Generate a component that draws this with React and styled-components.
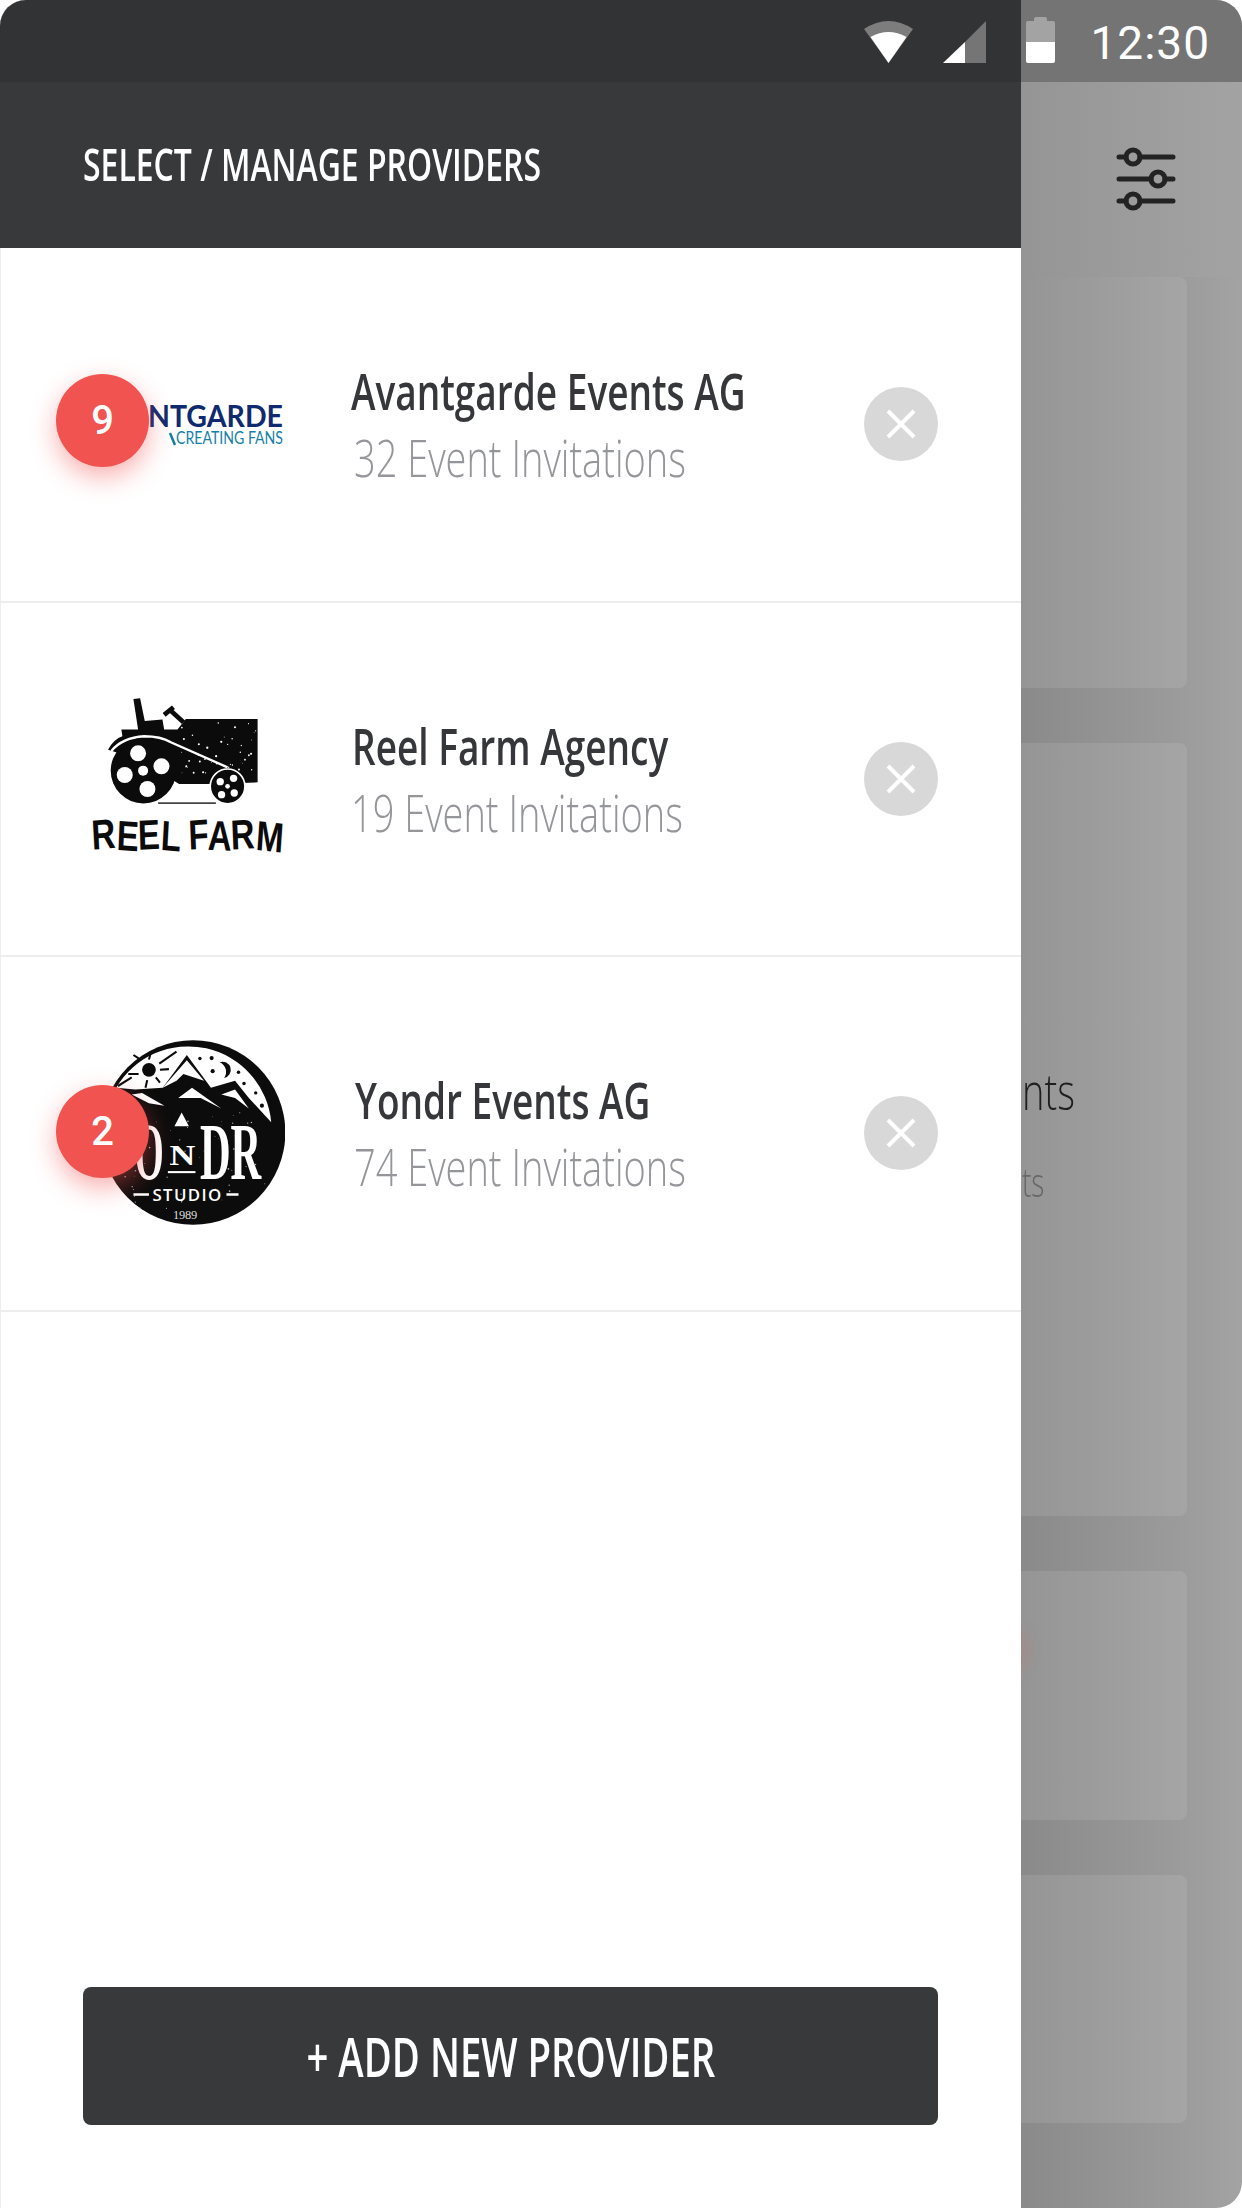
import React from "react";
import styled, { createGlobalStyle } from "styled-components";

const GlobalStyle = createGlobalStyle`
  html, body {
    margin: 0;
    padding: 0;
    background: #ffffff;
  }
`;

const Screen = styled.div`
  position: relative;
  width: 1242px;
  height: 2208px;
  overflow: hidden;
  background: #ffffff;
  font-family: "Open Sans", "Liberation Sans", sans-serif;
`;

const Backdrop = styled.div`
  position: absolute;
  inset: 0;
  border-radius: 26px;
  overflow: hidden;
  background: linear-gradient(90deg, #8a8a8a 1021px, #9c9c9c 1186px, #a3a3a3 1242px);
  display: flex;
  flex-direction: column;
  align-items: flex-end;
`;

const BackdropStatus = styled.div`
  align-self: stretch;
  height: 82px;
  background: #747474;
  flex-shrink: 0;
`;

const BackdropToolbar = styled.div`
  align-self: stretch;
  height: 195px;
  flex-shrink: 0;
  display: flex;
  justify-content: flex-end;
  padding: 64px 66px 0 0;
  box-sizing: border-box;
  background: linear-gradient(90deg, #959595 1021px, #a3a3a3 1242px);
`;

const BackdropCards = styled.div`
  display: flex;
  flex-direction: column;
  gap: 55px;
  padding-right: 55px;
`;

const BackdropCard = styled.div`
  position: relative;
  width: 250px;
  height: ${(p) => p.$h}px;
  border-radius: 0 8px 8px 0;
  background: linear-gradient(90deg, #959595 34%, #a5a5a5);
  box-sizing: border-box;
  padding-top: ${(p) => p.$pad || 0}px;
  overflow: hidden;
`;

const BackdropTitle = styled.div`
  font-weight: 300;
  font-size: 50px;
  line-height: 60px;
  color: #1e1e1e;
  transform: scaleX(0.76);
  transform-origin: left;
  white-space: nowrap;
  margin-left: 85px;
`;

const BackdropSub = styled(BackdropTitle)`
  font-size: 40px;
  line-height: 50px;
  color: #666;
  margin-top: 36px;
  transform: scaleX(0.7);
`;

const BadgeGlow = styled.div`
  position: absolute;
  left: 34px;
  top: 49px;
  width: 60px;
  height: 60px;
  border-radius: 50%;
  background: rgba(242, 83, 80, 0.1);
  filter: blur(6px);
`;

const Drawer = styled.div`
  position: absolute;
  top: 0;
  left: 0;
  bottom: 0;
  width: 1021px;
  background: #ffffff;
  border-radius: 26px 0 0 0;
  overflow: hidden;
  display: flex;
  flex-direction: column;
  box-shadow: inset 1px 0 0 #eeeeee;
`;

const DrawerStatus = styled.div`
  height: 82px;
  background: #323335;
  flex-shrink: 0;
`;

const DrawerHeader = styled.div`
  height: 166px;
  background: #38393b;
  flex-shrink: 0;
  display: flex;
  align-items: center;
  padding-left: 83px;
  box-sizing: border-box;
`;

const CondensedText = styled.span`
  display: inline-block;
  white-space: nowrap;
  transform-origin: left center;
  transform: scaleX(${(p) => p.$sx || 0.8});
`;

const HeaderTitle = styled(CondensedText)`
  font-weight: 600;
  font-size: 45px;
  line-height: 54px;
  color: #ffffff;
  margin-top: -2px;
`;

const ProviderList = styled.div`
  display: flex;
  flex-direction: column;
`;

const ProviderRow = styled.div`
  height: 354.5px;
  flex-shrink: 0;
  box-sizing: border-box;
  border-bottom: 2px solid #eceded;
  display: flex;
  align-items: center;
  padding-left: 80px;
  padding-right: 83px;
`;

const LogoSlot = styled.div`
  position: relative;
  width: 214px;
  height: 200px;
  flex-shrink: 0;
  display: flex;
  align-items: center;
  justify-content: center;
`;

const LogoArt = styled.div`
  flex-shrink: 0;
  transform: translate(${(p) => p.$dx || 0}px, ${(p) => p.$dy || 0}px);
`;

const UnreadBadge = styled.div`
  position: absolute;
  left: -24px;
  top: ${(p) => p.$top}px;
  width: 93px;
  height: 93px;
  border-radius: 50%;
  background: #f15350;
  color: #ffffff;
  font-size: 40px;
  font-weight: 500;
  font-family: Roboto, sans-serif;
  display: flex;
  align-items: center;
  justify-content: center;
  box-shadow: 0 10px 26px rgba(242, 83, 80, 0.45);
`;

const ProviderInfo = styled.div`
  flex: 1;
  min-width: 0;
  margin-left: ${(p) => p.$ml}px;
  display: flex;
  flex-direction: column;
  align-items: flex-start;
  gap: 8px;
`;

const ProviderName = styled(CondensedText)`
  font-weight: 600;
  font-size: 50px;
  line-height: 58px;
  color: #36373a;
`;

const ProviderCount = styled(CondensedText)`
  font-weight: 300;
  font-size: 52px;
  line-height: 58px;
  color: #95969a;
  margin-left: ${(p) => p.$offset || 0}px;
`;

const RemoveButton = styled.button`
  width: 74px;
  height: 74px;
  border: none;
  padding: 0;
  border-radius: 50%;
  background: #d8d8d8;
  flex-shrink: 0;
  display: flex;
  align-items: center;
  justify-content: center;
`;

const Footer = styled.div`
  margin-top: auto;
  padding: 0 83px 83px;
`;

const AddButton = styled.button`
  width: 100%;
  height: 138px;
  border: none;
  border-radius: 8px;
  background: #38393b;
  color: #ffffff;
  display: flex;
  align-items: center;
  justify-content: center;
  font-family: inherit;
`;

const AddLabel = styled(CondensedText)`
  font-weight: 600;
  font-size: 54px;
  line-height: 64px;
  transform-origin: center;
`;

const StatusIcons = styled.div`
  position: absolute;
  top: 0;
  right: 0;
  height: 63px;
  display: flex;
  align-items: flex-end;
`;

const StatusGap = styled.span`
  width: ${(p) => p.$w}px;
`;

const Clock = styled.div`
  font-family: Roboto, sans-serif;
  font-size: 46px;
  font-weight: 400;
  letter-spacing: 1px;
  color: #ffffff;
  margin: 0 32px 0 35px;
  line-height: 48px;
  height: 48px;
  position: relative;
  top: 4px;
`;

const CloseIcon = () => (
  <svg width="32" height="32" viewBox="0 0 32 32">
    <path d="M3 3 L29 29 M29 3 L3 29" stroke="#fff" strokeWidth="4" fill="none" />
  </svg>
);

const WifiIcon = () => (
  <svg width="49" height="42" viewBox="0 0 49 42" style={{ display: "block" }}>
    <path d="M0 8 Q24.5 -8 49 8 L24.5 42 Z" fill="#7d7d7e" />
    <path d="M6.5 16 Q24.5 6 42.5 16 L24.5 42 Z" fill="#fff" />
  </svg>
);

const SignalIcon = () => (
  <svg width="43" height="42" viewBox="0 0 43 42" style={{ display: "block" }}>
    <path d="M43 0 V42 H22 V21 Z" fill="#757576" />
    <path d="M22 21 V42 H0 Z" fill="#fff" />
  </svg>
);

const BatteryIcon = () => (
  <svg width="29" height="46" viewBox="0 0 29 46" style={{ display: "block" }}>
    <path d="M8 2 Q8 0 10 0 H19 Q21 0 21 2 V4 H27 Q29 4 29 6 V25 H0 V6 Q0 4 2 4 H8 Z" fill="#a3a3a3" />
    <path d="M0 25 H29 V44 Q29 46 27 46 H2 Q0 46 0 44 Z" fill="#fff" />
  </svg>
);

const SlidersIcon = () => (
  <svg width="60" height="66" viewBox="0 0 60 66" style={{ display: "block" }}>
    <g stroke="#232323" strokeWidth="5" fill="none" strokeLinecap="round">
      <path d="M3 11 H10 M24 11 H57 M3 33 H35 M49 33 H57 M3 55 H10 M24 55 H57" />
      <circle cx="17" cy="11" r="7" />
      <circle cx="42" cy="33" r="7" />
      <circle cx="17" cy="55" r="7" />
    </g>
  </svg>
);

// white flecks on the printed logos
const speckles = (count, seed, x, y, w, h, fill, maxR = 3) => {
  let s = seed;
  const next = () => {
    s = (s * 16807) % 2147483647;
    return (s % 1000) / 1000;
  };
  return Array.from({ length: count }, (_, i) => (
    <circle key={i} cx={x + next() * w} cy={y + next() * h} r={1 + next() * maxR} fill={fill} />
  ));
};

const AvantgardeLogo = () => (
  <svg width="210" height="70" viewBox="0 0 210 70" style={{ display: "block" }}>
    <text x="201" y="38" textAnchor="end" fontFamily="Lato, sans-serif" fontWeight="700" fontSize="31" fill="#0f2a6e" textLength="135" lengthAdjust="spacingAndGlyphs">
      NTGARDE
    </text>
    <text x="201" y="55" textAnchor="end" fontFamily="Lato, sans-serif" fontSize="17" fill="#1380a8" textLength="107" lengthAdjust="spacingAndGlyphs">
      CREATING FANS
    </text>
    <path d="M88 44 L93 56" stroke="#1380a8" strokeWidth="2.5" />
  </svg>
);

const ReelFarmLogo = () => (
  <svg width="207" height="164" viewBox="100 100 620 490" style={{ display: "block" }}>
    <path
      d="M172 272 Q190 240 215 232 L212 212 L262 212 L248 120 L268 118 L282 186 L335 182 L340 212 L380 212 L405 180 L620 180 L620 370 L480 375 L385 375 L260 300 Z"
      fill="#0b0b0b"
    />
    <path d="M398 190 L356 152 M340 168 L368 145" stroke="#0b0b0b" strokeWidth="14" fill="none" />
    {speckles(46, 71, 390, 190, 225, 175, "#fff", 2.5)}
    <path d="M182 276 Q215 236 280 232 Q330 232 360 250 L530 325" stroke="#fff" strokeWidth="7" fill="none" />
    <circle cx="278" cy="335" r="98" fill="#0b0b0b" />
    <circle cx="530" cy="382" r="52" fill="#0b0b0b" stroke="#fff" strokeWidth="5" />
    <g fill="#fff">
      <circle cx="262" cy="283" r="24" />
      <circle cx="332" cy="322" r="24" />
      <circle cx="222" cy="348" r="24" />
      <circle cx="290" cy="390" r="24" />
      <circle cx="277" cy="335" r="15" />
      <circle cx="508" cy="368" r="11" />
      <circle cx="548" cy="358" r="11" />
      <circle cx="550" cy="402" r="11" />
      <circle cx="512" cy="407" r="11" />
      <circle cx="530" cy="382" r="7" />
    </g>
    <path d="M322 432 H495" stroke="#444" strokeWidth="5" />
    <text x="125" y="572" rotate="-4 3 -2 4 0 -3 2 -3 5" fontFamily="'Liberation Sans', sans-serif" fontWeight="700" fontSize="126" fill="#0b0b0b" textLength="570" lengthAdjust="spacingAndGlyphs">
      REEL FARM
    </text>
  </svg>
);

const YondrLogo = () => (
  <svg width="186" height="193" viewBox="195 60 540 560" style={{ display: "block" }}>
    <circle cx="468" cy="340" r="268" fill="#0c0c0c" />
    <path d="M245 210 A242 242 0 0 1 695 310 L630 240 L590 190 L520 210 L450 115 L380 210 L300 215 Z" fill="#fff" />
    <path d="M380 210 L450 130 L500 190 L440 170 L420 190 Z" fill="#fff" />
    <path d="M425 240 L465 210 L550 270 L490 240 Z" fill="#fff" />
    <path d="M550 230 L590 215 L630 270 L590 240 Z" fill="#fff" />
    <path d="M290 230 L320 225 L385 262 L340 255 Z" fill="#fff" />
    <circle cx="340" cy="158" r="20" fill="#0c0c0c" />
    <path d="M290 180 L250 205 M310 125 L295 115 M340 128 L345 110 M370 140 L420 105 M372 158 L398 156 M360 180 L372 195 M335 188 L330 210 M310 170 L280 170" stroke="#0c0c0c" strokeWidth="6" />
    <path d="M545 136 A24 24 0 1 1 558 182 A30 30 0 0 0 545 136 Z" fill="#0c0c0c" />
    <circle cx="488" cy="125" r="5" fill="#0c0c0c" />
    <circle cx="522" cy="124" r="6" fill="#0c0c0c" />
    <circle cx="525" cy="162" r="6" fill="#0c0c0c" />
    <circle cx="600" cy="165" r="5" fill="#0c0c0c" />
    <circle cx="616" cy="198" r="5" fill="#0c0c0c" />
    <circle cx="650" cy="225" r="5" fill="#0c0c0c" />
    <circle cx="668" cy="262" r="6" fill="#0c0c0c" />
    {speckles(70, 29, 260, 280, 420, 290, "#b5b5b5", 1.5)}
    <path d="M435 282 L456 322 L414 322 Z" fill="#fff" />
    <text x="298" y="475" fontFamily="'Liberation Serif', serif" fontWeight="700" fontSize="235" fill="#fff" textLength="85" lengthAdjust="spacingAndGlyphs">
      O
    </text>
    <text x="400" y="435" fontFamily="'Liberation Serif', serif" fontWeight="700" fontSize="88" fill="#fff" textLength="75" lengthAdjust="spacingAndGlyphs">
      N
    </text>
    <path d="M395 455 H475" stroke="#fff" strokeWidth="6" />
    <text x="488" y="475" fontFamily="'Liberation Serif', serif" fontWeight="700" fontSize="235" fill="#fff" textLength="178" lengthAdjust="spacingAndGlyphs">
      DR
    </text>
    <text x="350" y="540" fontFamily="'Open Sans', sans-serif" fontWeight="600" fontSize="49" fill="#fff" textLength="200" lengthAdjust="spacing">
      STUDIO
    </text>
    <path d="M295 520 H340 M565 520 H600" stroke="#fff" strokeWidth="7" />
    <text x="410" y="590" fontFamily="'Liberation Serif', serif" fontSize="36" fill="#ddd" textLength="70">
      1989
    </text>
  </svg>
);

const providers = [
  { name: "Avantgarde Events AG", count: "32 Event Invitations", logo: <AvantgardeLogo />, badge: "9", badgeTop: 50, ml: 57, offset: 3 },
  { name: "Reel Farm Agency", count: "19 Event Invitations", logo: <ReelFarmLogo />, dy: -5, ml: 58, offset: -1 },
  { name: "Yondr Events AG", count: "74 Event Invitations", logo: <YondrLogo />, badge: "2", badgeTop: 52, dx: 5, dy: -1, ml: 61, offset: -1 },
];

const App = () => {
  return (
    <Screen>
      <GlobalStyle />
      <Backdrop>
        <BackdropStatus />
        <BackdropToolbar>
          <SlidersIcon />
        </BackdropToolbar>
        <BackdropCards>
          <BackdropCard $h={411} />
          <BackdropCard $h={773} $pad={318}>
            <BackdropTitle>nts</BackdropTitle>
            <BackdropSub>ts</BackdropSub>
          </BackdropCard>
          <BackdropCard $h={249}>
            <BadgeGlow />
          </BackdropCard>
          <BackdropCard $h={248} />
        </BackdropCards>
      </Backdrop>
      <Drawer>
        <DrawerStatus />
        <DrawerHeader>
          <HeaderTitle $sx={0.71}>SELECT / MANAGE PROVIDERS</HeaderTitle>
        </DrawerHeader>
        <ProviderList>
          {providers.map((p) => (
            <ProviderRow key={p.name}>
              <LogoSlot>
                <LogoArt $dx={p.dx} $dy={p.dy}>{p.logo}</LogoArt>
                {p.badge && <UnreadBadge $top={p.badgeTop}>{p.badge}</UnreadBadge>}
              </LogoSlot>
              <ProviderInfo $ml={p.ml}>
                <ProviderName $sx={0.74}>{p.name}</ProviderName>
                <ProviderCount $sx={0.73} $offset={p.offset}>{p.count}</ProviderCount>
              </ProviderInfo>
              <RemoveButton aria-label={`Remove ${p.name}`}>
                <CloseIcon />
              </RemoveButton>
            </ProviderRow>
          ))}
        </ProviderList>
        <Footer>
          <AddButton>
            <AddLabel $sx={0.71}>+ ADD NEW PROVIDER</AddLabel>
          </AddButton>
        </Footer>
      </Drawer>
      <StatusIcons>
        <WifiIcon />
        <StatusGap $w={30} />
        <SignalIcon />
        <StatusGap $w={40} />
        <BatteryIcon />
        <Clock>12:30</Clock>
      </StatusIcons>
    </Screen>
  );
};

export default App;
